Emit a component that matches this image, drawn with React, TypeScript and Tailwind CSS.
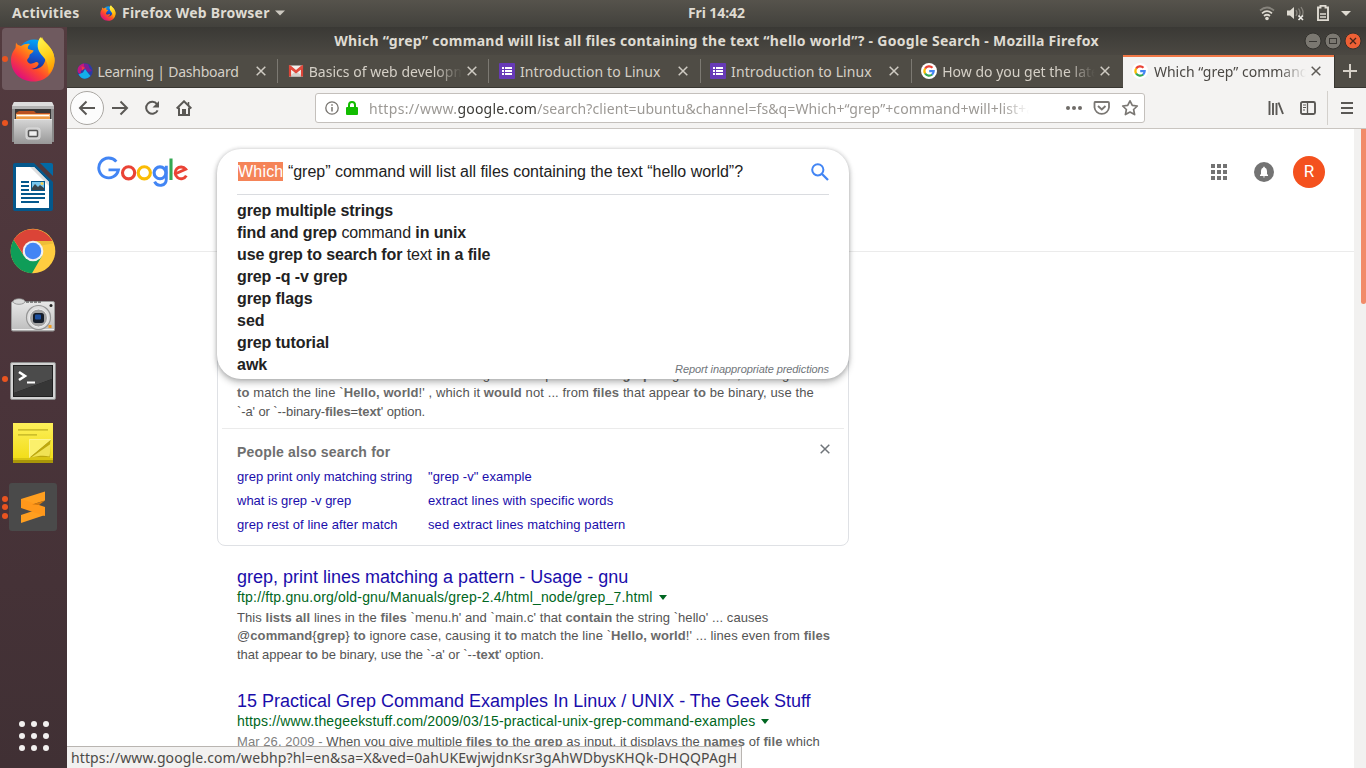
import React from "react";

const UI = "font-['Noto_Sans',sans-serif]";

function FirefoxIcon({ size }: { size: number }) {
  return (
    <svg width={size} height={size} viewBox="0 0 46 46">
      <defs>
        <linearGradient id="fxBody" x1="0.8" y1="0.1" x2="0.2" y2="0.9">
          <stop offset="0" stopColor="#ffe226" />
          <stop offset="0.35" stopColor="#ff9a10" />
          <stop offset="0.65" stopColor="#ff4a2c" />
          <stop offset="1" stopColor="#e0107a" />
        </linearGradient>
        <linearGradient id="fxGlobe" x1="0.6" y1="0" x2="0.4" y2="1">
          <stop offset="0" stopColor="#00a8f8" />
          <stop offset="0.5" stopColor="#1358d0" />
          <stop offset="1" stopColor="#2a1b72" />
        </linearGradient>
        <linearGradient id="fxTail" x1="0.3" y1="0" x2="0.6" y2="1">
          <stop offset="0" stopColor="#fff44f" />
          <stop offset="0.5" stopColor="#ffd21c" />
          <stop offset="1" stopColor="#ff9600" />
        </linearGradient>
      </defs>
      <circle cx="24" cy="20" r="16.5" fill="url(#fxGlobe)" />
      <path
        d="M6 6.500C7 9 9 9.500 11 10C14 8 17 7.500 20 8C18 10 17.500 11 18 13C20 14 23 14 23.500 14.500C23.500 16.500 20.500 17.500 19.500 19C20 21 18 22 17 24C18 28 21 28.500 25 26.500C27 25.500 29 26.500 28.500 28.500C27 31.500 24 32.500 21 33C30 34 36 29 35.500 20C34 16 29 15 29 9C29 5 31 3 32 1C33 6 43 10 44.500 22C45.500 35 37 45.500 23.500 45.500C10 45.500 1 36 1 24C1 18 4 14 5.500 12Z"
        fill="url(#fxBody)"
      />
      <path
        d="M30.500 1C32 6 44 10 44.500 24C44.500 29 42 35 38.500 38C39 32 37.500 25 32.500 20C27 14.500 26 7 30.500 1Z"
        fill="url(#fxTail)"
      />
    </svg>
  );
}

function FilesIcon() {
  return (
    <svg width="44" height="46" viewBox="0 0 44 46">
      <defs>
        <linearGradient id="cab" x1="0" y1="0" x2="0" y2="1">
          <stop offset="0" stopColor="#d6d6d6" />
          <stop offset="1" stopColor="#989898" />
        </linearGradient>
      </defs>
      <path d="M3 2H41L43 7V42H1V7Z" fill="#8b8b8b" />
      <path d="M3 2H41L43 6H1Z" fill="#dedede" />
      <rect x="1" y="6" width="42" height="3" fill="#b4b4b4" />
      <rect x="4" y="9" width="36" height="11" fill="#383838" />
      <path d="M5 13L8 11H23L25 13H39V20H5Z" fill="#b95120" />
      <rect x="5" y="14" width="34" height="3" fill="#f6be82" />
      <rect x="6" y="15" width="32" height="1" fill="#fff" />
      <rect x="5" y="17" width="34" height="3" fill="#ed9b45" />
      <path d="M3 19H41V44H3Z" fill="url(#cab)" />
      <path d="M3 19H41V20H3Z" fill="#e8e8e8" />
      <rect x="15" y="28" width="14" height="11" rx="2" fill="#ccc" stroke="#ddd" />
      <rect x="17.500" y="30.500" width="9" height="6" rx="1" fill="#efefef" stroke="#555" strokeWidth="1.500" />
    </svg>
  );
}

function WriterIcon() {
  return (
    <svg width="42" height="48" viewBox="0 0 42 48">
      <path d="M3 0H22L41 19V46Q41 48 39 48H3Q1 48 1 46V2Q1 0 3 0Z" fill="#04588c" />
      <path d="M28 0H39Q41 0 41 2V13Z" fill="#0369a3" />
      <path d="M4 4H22L37 19V45H4Z" fill="#fff" />
      <path d="M22 4L37 19V23L18 4Z" fill="#dedede" />
      <g fill="#04588c">
        <rect x="9" y="18" width="8" height="2" />
        <rect x="9" y="22" width="8" height="2" />
        <rect x="9" y="26" width="8" height="2" />
        <rect x="9" y="30" width="24" height="2" />
        <rect x="9" y="34" width="24" height="2" />
        <rect x="9" y="38" width="18" height="2" />
        <rect x="19" y="18" width="14" height="10" />
      </g>
      <rect x="20" y="19" width="12" height="8" fill="#79c7ed" />
      <path d="M20 27V25L23 21L26 24L28 22L32 25V27Z" fill="#39444a" />
      <circle cx="30" cy="20.500" r="1.500" fill="#f8cf54" />
    </svg>
  );
}

function ChromeIcon() {
  return (
    <svg width="46" height="46" viewBox="0 0 46 46">
      <circle cx="23" cy="23" r="22.300" fill="#ffcd40" />
      <path d="M3.700 11.800A22.300 22.300 0 0 0 22 45.300L32 28L14 28Z" fill="#0f9d58" />
      <path d="M3.700 11.800L14.300 28L23 13H42.300A22.300 22.300 0 0 0 3.700 11.800Z" fill="#db4437" />
      <path d="M23 13H42.300L43.200 15.500L28 18Z" fill="#c79a2c" opacity=".3" />
      <circle cx="23" cy="23" r="10.300" fill="#f1f1f1" />
      <circle cx="23" cy="23" r="8.200" fill="#4285f4" />
    </svg>
  );
}

function CameraIcon() {
  return (
    <svg width="46" height="34" viewBox="0 0 46 34">
      <defs>
        <linearGradient id="cam" x1="0" y1="0" x2="0" y2="1">
          <stop offset="0" stopColor="#e8e8e8" />
          <stop offset="1" stopColor="#bdbdbd" />
        </linearGradient>
      </defs>
      <rect x="1.500" y="3.500" width="43" height="29.500" rx="1.500" fill="url(#cam)" stroke="#9a9a9a" />
      <rect x="2" y="31" width="42" height="1" fill="#eee" />
      <ellipse cx="9" cy="3.500" rx="6" ry="2.800" fill="#d9d9d9" stroke="#888" strokeWidth=".8" />
      <path d="M16 4H32" stroke="#666" strokeWidth="1.500" strokeDasharray="3 1" />
      <circle cx="28.500" cy="19.500" r="12" fill="#dedede" stroke="#959595" strokeWidth="1.200" />
      <circle cx="28.500" cy="20" r="9" fill="#a3a3a3" stroke="#eee" />
      <rect x="23" y="15" width="11" height="10" rx="2.500" fill="#151c28" />
      <rect x="25" y="16.500" width="6" height="5" rx="1" fill="#1c4f9f" />
      <circle cx="41" cy="7.500" r="1.500" fill="#222" />
      <rect x="38.500" y="27" width="3" height="3" fill="#f29b22" />
    </svg>
  );
}

function TerminalIcon() {
  return (
    <svg width="46" height="40" viewBox="0 0 46 40" className="mt-[3px]">
      <rect x=".5" y="1.500" width="45" height="37" rx="1.500" fill="#d2d2d2" stroke="#8c8c8c" />
      <rect x="3" y="4" width="40" height="32" fill="#1f1f1f" />
      <path d="M4 5H42V18L4 32Z" fill="#4b4b4b" />
      <path d="M4 32L42 18V35H4Z" fill="#363636" />
      <path d="M9 11L15 15L9 19" fill="none" stroke="#fff" strokeWidth="2.600" />
      <rect x="17" y="20.500" width="8" height="2" fill="#fff" />
    </svg>
  );
}

function NotesIcon() {
  return (
    <svg width="42" height="42" viewBox="0 0 42 42">
      <defs>
        <linearGradient id="note" x1="0" y1="0" x2="0" y2="1">
          <stop offset="0" stopColor="#fdf05a" />
          <stop offset="1" stopColor="#f2dd18" />
        </linearGradient>
      </defs>
      <rect x="1" y="37" width="40" height="4" fill="#a99609" />
      <rect x="1" y="1" width="40" height="36" fill="url(#note)" />
      <rect x="1" y="36" width="40" height="2" fill="#d8c412" />
      <rect x="6" y="7" width="30" height="1.700" fill="#cdbf2c" />
      <rect x="6" y="12" width="19" height="1.700" fill="#cdbf2c" />
      <path d="M17.500 35.500V17.500H39Z" fill="#fbf06c" stroke="#fcf6a5" strokeWidth=".8" />
      <path d="M39 17.500C37 22 39 29 38 35.500H17.500Z" fill="#bda80f" />
      <path d="M38.500 22C37.500 27 38.500 31 37.500 34.500C31 33 26 34 19.500 35.300Z" fill="#f0e254" />
    </svg>
  );
}

function SublimeIcon() {
  return (
    <svg width="48" height="48" viewBox="0 0 48 48">
      <rect width="48" height="48" rx="3" fill="#4a4a4a" />
      <path d="M12 16L36 8.500V17.500L12 25Z" fill="#ff9f20" />
      <path d="M12 32L36 24V32L12 40Z" fill="#ff9f20" />
      <path d="M12 16V25L36 33V24Z" fill="#ff981b" />
      <path d="M23 21.500L36 17.500L30 22Z" fill="#d97a0c" />
    </svg>
  );
}

function GoogleG({ size = 16 }: { size?: number }) {
  return (
    <svg width={size} height={size} viewBox="0 0 16 16" className="shrink-0">
      <circle cx="8" cy="8" r="8" fill="#fff" />
      <g fill="none" strokeWidth="2.200">
        <path d="M4.100 5.600A4.700 4.700 0 0 1 11.500 4.700" stroke="#ea4335" />
        <path d="M4.200 10.600A4.700 4.700 0 0 1 4.200 5.500" stroke="#fbbc05" />
        <path d="M11.200 11.500A4.700 4.700 0 0 1 4.100 10.500" stroke="#34a853" />
        <path d="M8.200 8.100H12.700A4.700 4.700 0 0 1 11.100 11.600" stroke="#4285f4" />
      </g>
    </svg>
  );
}

function DashboardIcon() {
  return (
    <svg width="16" height="16" viewBox="0 0 16 16" className="shrink-0">
      <circle cx="8" cy="8" r="7.700" fill="#2b3ba8" />
      <path d="M1 9.500C-.5 5 2.500 1 7 .4L8 5L4 8L3.500 11.500Z" fill="#c2187c" />
      <path d="M7 .4L11 1.200L12.500 5L15 8L11 9L8 6Z" fill="#7b1f92" />
      <path d="M1.500 11.500L6 9.500L8 6L11 10L13.500 13Q9 17.500 4 14.500Z" fill="#14aeea" />
      <path d="M4.500 3L8 5L5 7.500Z" fill="#ef3a43" />
    </svg>
  );
}

function GmailIcon() {
  return (
    <svg width="16" height="16" viewBox="0 0 16 16" className="shrink-0">
      <path d="M1 2.500H15V13.500H1Z" fill="#f1efec" />
      <path d="M3 12L8 8L13 12V13.500H3Z" fill="#d4d0cb" />
      <path d="M2 13.500V4L8 9L14 4V13.500" fill="none" stroke="#dd4336" strokeWidth="2.200" />
      <path d="M1 2.500H2.500L8 7L13.500 2.500H15V5L8 10L1 5Z" fill="#e04b3d" />
    </svg>
  );
}

function FormsIcon() {
  return (
    <svg width="16" height="16" viewBox="0 0 16 16" className="shrink-0">
      <rect width="16" height="16" rx="1" fill="#673ab7" />
      <g fill="#fff">
        <rect x="3" y="4" width="2" height="2" />
        <rect x="6" y="4" width="7" height="2" />
        <rect x="3" y="7" width="2" height="2" />
        <rect x="6" y="7" width="7" height="2" />
        <rect x="3" y="10" width="2" height="2" />
        <rect x="6" y="10" width="7" height="2" />
      </g>
    </svg>
  );
}

function GoogleLogo() {
  return (
    <svg width="92" height="32" viewBox="0 0 92 32" fill="none" strokeWidth="3.100">
      <path d="M19.300 5.600A9.900 9.900 0 1 0 21.400 13.900H11.500" stroke="#4285f4" strokeWidth="2.900" />
      <circle cx="31.600" cy="16.800" r="6.100" stroke="#ea4335" />
      <circle cx="47.300" cy="16.800" r="6.100" stroke="#fbbc05" />
      <circle cx="63" cy="16.800" r="5.900" stroke="#4285f4" />
      <path d="M69.300 9.700V23C69.300 30.800 60 31 57.600 25.600" stroke="#4285f4" strokeWidth="2.900" />
      <path d="M74 2.500V24" stroke="#34a853" />
      <path d="M89.300 19.600A5.900 5.900 0 1 1 88.700 13.200L78.500 17.800" stroke="#ea4335" strokeWidth="2.900" />
    </svg>
  );
}

const dock = [
  { name: "firefox", icon: <FirefoxIcon size={46} />, dots: 1, active: true },
  { name: "files", icon: <FilesIcon />, dots: 1 },
  { name: "writer", icon: <WriterIcon />, dots: 0 },
  { name: "chrome", icon: <ChromeIcon />, dots: 0 },
  { name: "camera", icon: <CameraIcon />, dots: 0 },
  { name: "terminal", icon: <TerminalIcon />, dots: 1 },
  { name: "notes", icon: <NotesIcon />, dots: 0 },
  { name: "sublime", icon: <SublimeIcon />, dots: 3 },
];

function Dock() {
  return (
    <aside className="flex w-[67px] shrink-0 flex-col justify-between bg-linear-to-b from-[#533b3f] via-[#4a343a] to-[#403034]">
      <div className="flex flex-col">
        {dock.map((d) => (
          <div key={d.name} className="flex h-16 items-center px-0.5">
            <div
              className={
                "relative flex h-[62px] w-[62px] items-center justify-center rounded " + (d.active ? "bg-[#6f5a5f]" : "")
              }
            >
              <div className="absolute inset-y-0 left-0 flex flex-col items-center justify-center gap-[2.500px]">
                {Array.from({ length: d.dots }, (_, i) => (
                  <span key={i} className="size-[6px] rounded-full bg-[#e95420]" />
                ))}
              </div>
              {d.icon}
            </div>
          </div>
        ))}
      </div>
      <div className="flex h-[65px] items-center justify-center">
        <div className="grid grid-cols-3 gap-1.5">
          {Array.from({ length: 9 }, (_, i) => (
            <span key={i} className="size-1.5 rounded-full bg-[#f2f0ef]" />
          ))}
        </div>
      </div>
    </aside>
  );
}

function TopBar() {
  return (
    <header
      className={
        UI +
        " grid h-[27px] shrink-0 grid-cols-[688px_auto_1fr] items-center bg-linear-to-b from-[#56534c] to-[#42413c] pb-[2px] text-[14px] font-bold text-[#dfdbd2]"
      }
    >
      <div className="flex items-center pl-3">
        <span className="w-[88px] tracking-[0.25px]">Activities</span>
        <FirefoxIcon size={16} />
        <span className="ml-1.5 tracking-[0.23px]">Firefox Web Browser</span>
        <svg width="10" height="6" viewBox="0 0 10 6" className="ml-[5px]">
          <path d="M0 .5H10L5 5.500Z" fill="#ccc8c0" />
        </svg>
      </div>
      <span className="tracking-[-0.1px]">Fri 14:42</span>
      <div className="flex items-center justify-end pr-[15px]">
        <svg width="92" height="18" viewBox="0 0 92 18" fill="none">
          <g stroke="#dfdbd2" strokeWidth="1.700">
            <path d="M1 6.500Q8 .5 15 6.500" stroke="#86837c" />
            <path d="M3 9.300Q8 5 13 9.300" />
            <path d="M5 12Q8 9.500 11 12" />
          </g>
          <circle cx="8" cy="14.500" r="1.800" fill="#dfdbd2" />
          <path d="M28 6.500H31L35 3V15L31 11.500H28Z" fill="#dfdbd2" />
          <path d="M37 6Q39 9 37 12M39.500 4.500Q42.500 9 39.500 13M42 3Q46 9 42.500 12" stroke="#86837c" strokeWidth="1.300" />
          <path d="M39.500 11.500L44 16M44 11.500L39.500 16" stroke="#f0eee9" strokeWidth="1.600" />
          <path d="M61.500 1.900V3.500H59V16.100H69V3.500H66.500V1.900Z" stroke="#dfdbd2" strokeWidth="1.900" />
          <path d="M61 10H67M61 13H67" stroke="#dfdbd2" strokeWidth="1.600" />
          <path d="M82 7H92L87 12Z" fill="#dfdbd2" />
        </svg>
      </div>
    </header>
  );
}

function Cross({ color = "#cfcbc3", size = 10 }: { color?: string; size?: number }) {
  return (
    <svg width={size} height={size} viewBox="0 0 10 10" className="shrink-0">
      <path d="M.7 .7L9.300 9.300M9.300 .7L.7 9.300" stroke={color} strokeWidth="1.500" />
    </svg>
  );
}

function TitleBar() {
  return (
    <div className="grid h-[28px] shrink-0 grid-cols-[1fr_auto_1fr] items-center bg-linear-to-b from-[#3a3935] to-[#4b4842]">
      <span />
      <span
        className={UI + " mb-[2px] text-[14px] font-bold tracking-[0.285px] whitespace-nowrap text-[#dfdbd2]"}
      >
        Which “grep” command will list all files containing the text “hello world”? - Google Search - Mozilla Firefox
      </span>
      <svg width="58" height="18" viewBox="0 0 58 18" className="mr-[4px] justify-self-end">
        <g stroke="#33322e">
          <circle cx="9" cy="9" r="8" fill="#7b7871" />
          <circle cx="29" cy="9" r="8" fill="#7b7871" />
          <circle cx="49" cy="9" r="8" fill="#ee6035" />
        </g>
        <path d="M5 9.500H13" stroke="#3a3834" />
        <rect x="25.500" y="6.500" width="7" height="5" fill="none" stroke="#3a3834" />
        <path d="M46 6L52 12M52 6L46 12" stroke="#45251a" strokeWidth="1.300" />
      </svg>
    </div>
  );
}

const tabs = [
  { title: "Learning | Dashboard", icon: <DashboardIcon />, spacing: "tracking-[-0.24px]" },
  { title: "Basics of web development", icon: <GmailIcon />, spacing: "mask-r-from-82% tracking-[0.02px]" },
  { title: "Introduction to Linux", icon: <FormsIcon />, spacing: "tracking-[0.1px]" },
  { title: "Introduction to Linux", icon: <FormsIcon />, spacing: "tracking-[0.1px]" },
  { title: "How do you get the latest", icon: <GoogleG />, spacing: "mask-r-from-82%" },
];

function TabStrip() {
  return (
    <div className={UI + " flex h-[33px] shrink-0 bg-[#4f4c45] text-[14px] text-[#d5d0c7]"}>
      {tabs.map((t, i) => (
        <div key={i} className="flex w-[211.200px] shrink-0 items-center border-b border-[#383631] pl-[9.500px]">
          {t.icon}
          <span className={"ml-[5px] w-[153px] overflow-hidden whitespace-nowrap " + t.spacing}>{t.title}</span>
          <span className="ml-1 flex w-[12px] justify-center">
            <Cross />
          </span>
          <span className={"ml-auto h-6 w-px " + (i < 4 ? "bg-[#7c7972]" : "")} />
        </div>
      ))}
      <div className="flex w-[211px] shrink-0 items-center border-t-2 border-[#f07746] bg-[#f4f3f2] pb-[3px] pl-[9px] text-[#4b4844]">
        <GoogleG />
        <span className="ml-[6px] w-[152px] overflow-hidden mask-r-from-82% whitespace-nowrap">
          Which “grep” command will
        </span>
        <span className="ml-1 flex w-[12px] justify-center">
          <Cross color="#5e5b57" />
        </span>
      </div>
      <div className="flex flex-1 items-center justify-center border-b border-l border-[#383631]">
        <svg width="14" height="14" viewBox="0 0 14 14">
          <path d="M7 0V14M0 7H14" stroke="#d5d0c7" strokeWidth="2" />
        </svg>
      </div>
    </div>
  );
}

function NavBar() {
  return (
    <div className="flex h-[41px] shrink-0 items-center border-b border-[#c9c5c1] bg-[#f4f3f2] pl-[3px]">
      <div className="flex size-[34px] items-center justify-center rounded-full border border-[#aaa7a3] bg-[#fcfcfc]">
        <svg width="18" height="16" viewBox="0 0 18 16" fill="none" stroke="#5a5855" strokeWidth="2">
          <path d="M17 8H2M8.500 1.500L2 8L8.500 14.500" />
        </svg>
      </div>
      <svg width="18" height="16" viewBox="0 0 18 16" fill="none" stroke="#5a5855" strokeWidth="2" className="ml-[8px]">
        <path d="M0 8H15M8.500 1.500L15 8L8.500 14.500" />
      </svg>
      <svg width="16" height="16" viewBox="0 0 16 16" fill="none" className="ml-[14px]">
        <path d="M13 4.200A6 6 0 1 0 13.600 10.300" stroke="#5a5855" strokeWidth="2" />
        <path d="M15 1V7.500H8.500Z" fill="#5a5855" />
      </svg>
      <svg width="16" height="16" viewBox="0 0 16 16" fill="none" stroke="#5a5855" className="ml-[16px]">
        <path d="M.7 8.500L8 1.300L15.300 8.500" strokeWidth="2" />
        <path d="M3 7.500V15H13V7.500" strokeWidth="2" />
        <rect x="6.500" y="9.500" width="3" height="5" fill="#5a5855" />
        <path d="M12.500 2V5" strokeWidth="1.500" />
      </svg>
      <div
        className={
          UI +
          " ml-[123px] flex h-[30px] w-[830px] items-center rounded-[3px] border border-[#c4c0bc] bg-white pr-[4px] pl-[9px]"
        }
      >
        <svg width="14" height="14" viewBox="0 0 14 14" fill="none" stroke="#77746f">
          <circle cx="7" cy="7" r="6.200" strokeWidth="1.300" />
          <path d="M7 6V10.500M7 3.200V4.800" strokeWidth="1.500" />
        </svg>
        <svg width="12" height="14" viewBox="0 0 12 14" className="ml-[7px]">
          <rect y="6" width="12" height="8" rx="1" fill="#12bc00" />
          <path d="M3 7V4Q3 1 6 1Q9 1 9 4V7" fill="none" stroke="#12bc00" strokeWidth="2" />
        </svg>
        <span className="ml-[11px] w-[660px] overflow-hidden mask-r-from-96% text-[14px] tracking-[0.09px] whitespace-nowrap text-[#9c9995]">
          <span className="tracking-[0.33px]">https://www.</span>
          <span className="tracking-[0.2px] text-[#3c3b37]">google.com</span>
          /search?client=ubuntu&amp;channel=fs&amp;q=Which+“grep”+command+will+list+all
        </span>
        <svg width="76" height="18" viewBox="0 0 76 18" fill="none" stroke="#7a7773" className="ml-auto">
          <g fill="#6f6c68" stroke="none">
            <circle cx="4" cy="9" r="2" />
            <circle cx="10" cy="9" r="2" />
            <circle cx="16" cy="9" r="2" />
          </g>
          <path d="M31 3H44Q45 3 45 4V8.500A7.300 7.300 0 0 1 30.500 8.500V4Q30.500 3 31 3Z" strokeWidth="1.800" />
          <path d="M34 7L37.800 10.500L41.500 7" strokeWidth="1.900" />
          <path
            d="M66 1.800L68.300 6.300L73.300 7L69.600 10.500L70.600 15.600L66 13.100L61.400 15.600L62.400 10.500L58.700 7L63.700 6.300Z"
            strokeWidth="1.700"
            strokeLinejoin="round"
          />
        </svg>
      </div>
      <div className="ml-auto flex h-full items-center">
        <svg width="16" height="14" viewBox="0 0 16 14" fill="none" stroke="#5a5855" strokeWidth="1.900">
          <path d="M1.500 0V14M5 2V14M8.500 2V14M10.500 1.500L15 13" />
        </svg>
        <svg width="16" height="14" viewBox="0 0 16 14" fill="none" stroke="#5a5855" className="ml-[16px]">
          <rect x="1" y="1" width="14" height="12" rx="1.500" strokeWidth="1.900" />
          <path d="M7.500 1V13" strokeWidth="1.300" />
          <path d="M3 4H6M3 6.500H6M3 9H5" />
        </svg>
        <span className="ml-[11px] h-[34px] w-px bg-[#d3d0cc]" />
        <svg width="12" height="12" viewBox="0 0 12 12" className="mr-[13px] ml-[13px]">
          <path d="M0 1H12M0 6H12M0 11H12" stroke="#5a5855" strokeWidth="2" />
        </svg>
      </div>
    </div>
  );
}

const B = ({ children }: { children: React.ReactNode }) => <b className="font-bold text-[#6a6a6a]">{children}</b>;

function SearchBox() {
  return (
    <div className="absolute top-5 left-[150px] flex h-[230px] w-[632px] flex-col rounded-[24px] bg-white px-5 text-[16px] text-[#222] shadow-[0_0_4px_rgba(32,33,36,0.24),0_4px_6px_rgba(32,33,36,0.26)]">
      <div className="flex h-[46px] shrink-0 items-center border-b border-[#dadce0]">
        <span className="flex-1 pl-px leading-[19px] tracking-[-0.015px] whitespace-pre">
          <span className="inline-block bg-[#f58458] tracking-[0.2px] text-white">Which</span> “grep” command will list all
          files containing the text “hello world”?
        </span>
        <svg width="18" height="18" viewBox="0 0 18 18" fill="none" stroke="#4285f4" strokeWidth="2">
          <circle cx="6.800" cy="6.800" r="5.600" />
          <path d="M11 11L17 17" strokeWidth="2.300" />
        </svg>
      </div>
      <ul className="mt-[5px] leading-[22px] font-bold tracking-[-0.1px]">
        <li>grep multiple strings</li>
        <li>
          find and grep <span className="font-normal">command</span> in unix
        </li>
        <li className="tracking-[-0.125px]">
          use grep to search for <span className="font-normal">text</span> in a file
        </li>
        <li>grep -q -v grep</li>
        <li>grep flags</li>
        <li className="tracking-normal">sed</li>
        <li>grep tutorial</li>
        <li className="tracking-normal">awk</li>
      </ul>
      <span className="absolute right-[20px] bottom-[3px] text-[11px] leading-[13px] tracking-[-0.08px] text-[#70757a] italic">
        Report inappropriate predictions
      </span>
    </div>
  );
}

function PageHeader() {
  return (
    <div className="flex h-[123px] shrink-0 items-start justify-between border-b border-[#ebebeb] pr-[29px] pl-[30px]">
      <div className="mt-[27px]">
        <GoogleLogo />
      </div>
      <div className="mt-[27px] flex h-8 items-center">
        <div className="grid grid-cols-3 gap-x-[2px] gap-y-[2px]">
          {Array.from({ length: 9 }, (_, i) => (
            <span key={i} className="size-1 bg-[#737373]" />
          ))}
        </div>
        <svg width="20" height="20" viewBox="0 0 20 20" className="ml-[27px]">
          <circle cx="10" cy="10" r="10" fill="#737373" />
          <path d="M6 14V13L7 12V9Q7 6 9.300 5.500V4.700H10.700V5.500Q13 6 13 9V12L14 13V14ZM9 14.500H11Q11 15.500 10 15.500Q9 15.500 9 14.500Z" fill="#fff" />
        </svg>
        <div className="ml-[19px] flex size-8 items-center justify-center rounded-full bg-[#f4511e] font-['Roboto',sans-serif] text-[17px] text-white">
          R
        </div>
      </div>
    </div>
  );
}

function Arrow() {
  return (
    <svg width="8" height="5" viewBox="0 0 8 5" className="ml-[6px]">
      <path d="M0 0H8L4 5Z" fill="#006621" />
    </svg>
  );
}

function Results() {
  return (
    <div className="ml-[150px] flex w-[632px] flex-col text-[13px] leading-[18.500px] text-[#545454]">
      <section className="mt-[58px] flex h-[236px] flex-col justify-end rounded-lg border border-[#dfe1e5]">
        <div className="px-[19px] whitespace-nowrap">
          <div className="pl-[221px] tracking-[0.05px]">
            string <span className="pl-[18px]">The option causes </span>
            <B>grep</B> to ignore case, causing it
          </div>
          <div className="tracking-[0.1px]">
            <B>to</B> match the line `<B>Hello, world</B>!' , which it <B>would</B> not ... from <B>files</B> that appear{" "}
            <B>to</B> be binary, use the
          </div>
          <div className="tracking-[-0.1px]">
            `-a' or `--binary-<B>files</B>=<B>text</B>' option.
          </div>
        </div>
        <div className="mx-1 mt-[7px] border-t border-[#ebebeb]" />
        <div className="flex h-[116px] flex-col pr-[18px] pl-[19px]">
          <div className="mt-[14px] flex items-start justify-between">
            <h3 className="text-[14px] font-bold tracking-[0.18px] text-[#6f6f6f]">People also search for</h3>
            <span className="mt-px">
              <Cross color="#70757a" />
            </span>
          </div>
          <div className="mt-[3px] grid grid-cols-[191px_1fr] leading-[24px] text-[#1a0dab]">
            <span className="tracking-[0.04px]">grep print only matching string</span>
            <span className="tracking-[0.08px]">"grep -v" example</span>
            <span>what is grep -v grep</span>
            <span className="tracking-[0.12px]">extract lines with specific words</span>
            <span className="tracking-[0.08px]">grep rest of line after match</span>
            <span className="tracking-[0.09px]">sed extract lines matching pattern</span>
          </div>
        </div>
      </section>
      <article className="mt-[20px] px-5 whitespace-nowrap">
        <h3 className="text-[18px] leading-[22px] text-[#1a0dab]">grep, print lines matching a pattern - Usage - gnu</h3>
        <div className="flex items-center text-[14px] tracking-[0.17px] text-[#006621]">
          ftp://ftp.gnu.org/old-gnu/Manuals/grep-2.4/html_node/grep_7.html
          <Arrow />
        </div>
        <div className="mt-[2px]">
          <div className="tracking-[0.067px]">
            This <B>lists all</B> lines in the <B>files</B> `menu.h' and `main.c' that <B>contain</B> the string `hello' ... causes
          </div>
          <div className="tracking-[0.087px]">
            @<B>command</B>
            {"{"}
            <B>grep</B>
            {"} "}
            <B>to</B> ignore case, causing it <B>to</B> match the line `<B>Hello, world</B>!' ... lines even from <B>files</B>
          </div>
          <div className="tracking-[-0.05px]">
            that appear <B>to</B> be binary, use the `-a' or `--<B>text</B>' option.
          </div>
        </div>
      </article>
      <article className="mt-[26px] px-5 whitespace-nowrap">
        <h3 className="text-[18px] leading-[22px] text-[#1a0dab]">
          15 Practical Grep Command Examples In Linux / UNIX - The Geek Stuff
        </h3>
        <div className="flex items-center text-[14px] tracking-[0.158px] text-[#006621]">
          https://www.thegeekstuff.com/2009/03/15-practical-unix-grep-command-examples
          <Arrow />
        </div>
        <div className="mt-[2px] tracking-[0.075px]">
          <span className="text-[#808080]">Mar 26, 2009 - </span>When you give multiple <B>files to</B> the <B>grep</B> as input, it
          displays the <B>names</B> of <B>file</B> which
        </div>
      </article>
    </div>
  );
}

export default function App() {
  return (
    <div className="flex h-[768px] w-[1366px] flex-col overflow-hidden bg-white">
      <TopBar />
      <div className="flex min-h-0 flex-1">
        <Dock />
        <div className="flex min-w-0 flex-1 flex-col">
          <TitleBar />
          <TabStrip />
          <NavBar />
          <main className="relative flex min-h-0 flex-1 overflow-hidden font-['Liberation_Sans',sans-serif]">
            <div className="flex w-[1287px] flex-col">
              <PageHeader />
              <Results />
            </div>
            <div className="flex flex-1 justify-end bg-[#f2f1f0]">
              <div className="h-[175px] w-[5px] rounded-b-sm bg-[#f18b69]" />
            </div>
            <SearchBox />
            <div
              className={
                UI +
                " absolute bottom-0 left-0 flex h-[22px] w-[675px] items-center border-t border-r border-[#b9b5b1] bg-[#f2f1f0] pl-1 text-[14px] tracking-[0.12px] whitespace-nowrap text-[#4c4a47]"
              }
            >
              https://www.google.com/webhp?hl=en&amp;sa=X&amp;ved=0ahUKEwjwjdnKsr3gAhWDbysKHQk-DHQQPAgH
            </div>
          </main>
        </div>
      </div>
    </div>
  );
}
